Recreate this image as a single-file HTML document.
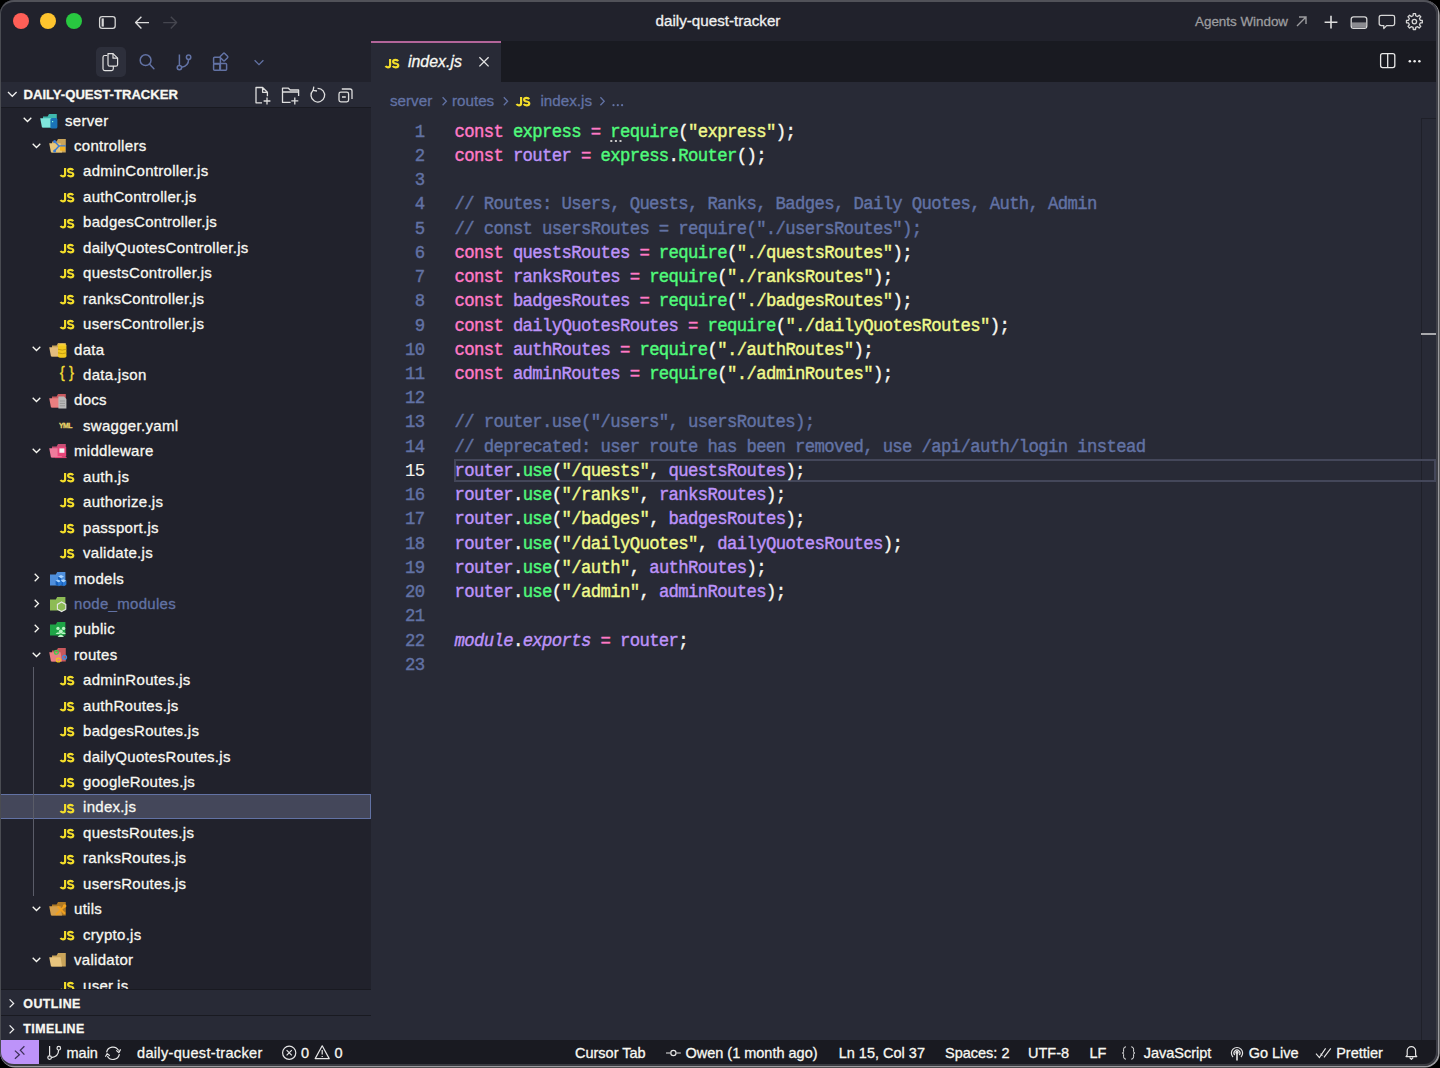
<!DOCTYPE html>
<html><head><meta charset="utf-8">
<style>
*{margin:0;padding:0;box-sizing:border-box}
html,body{width:1440px;height:1068px;overflow:hidden;background:#000}
body{font-family:"Liberation Sans",sans-serif;color:#f8f8f2;position:relative;-webkit-text-stroke:0.3px currentColor}
.abs{position:absolute}
#win{position:absolute;left:0;top:0;width:1438px;height:1066px;border-radius:14px;overflow:hidden;background:#21222c}
#frame{position:absolute;left:0;top:0;width:1438px;height:1066px;border-radius:14px;border-style:solid;border-color:#515259 #3e3f47 #393a40 #4a4c52;border-width:2.5px 2.5px 2.5px 1.5px;pointer-events:none;box-shadow:1px 1px 0 0.6px #9a9a9e}
#titlebar{position:absolute;left:0;top:0;width:1440px;height:41px;background:#21222c}
.tl{position:absolute;top:12.8px;width:16px;height:16px;border-radius:50%}
#title{position:absolute;left:655.5px;top:12.4px;font-size:15.2px;color:#f0f0f0;line-height:18px}
#agents{position:absolute;left:1195px;top:13px;font-size:13.4px;color:#9c9c9f;line-height:18px}
svg{position:absolute;overflow:visible}
/* sidebar */
#sidebar{position:absolute;left:0;top:41px;width:371px;height:999px;background:#21222c}
#acthl{position:absolute;left:96px;top:6.3px;width:30px;height:30px;border-radius:5px;background:#2d2f3b}
#exphdr{position:absolute;left:0;top:41px;width:371px;height:26px;background:#282a36;border-bottom:1px solid #191a21}
#exphdr .t{position:absolute;left:23.5px;top:4px;font-size:13.1px;font-weight:bold;line-height:18px;color:#f8f8f2}
#tree{position:absolute;left:0;top:66px;width:371px;height:882px;overflow:hidden}
.row{position:absolute;left:0;width:371px;height:25.44px;font-size:15px;letter-spacing:0.3px;line-height:18px;color:#f8f8f2;white-space:nowrap}
.row .n{position:absolute;top:4.6px}
.row.sel{background:#44475a;outline:1px solid #6272a4;outline-offset:-1px}
.js{position:absolute;top:10.6px;font-size:12.3px;font-weight:bold;color:#f1dd35;letter-spacing:0;line-height:9px;transform:scaleX(0.98);transform-origin:0 0}
.sechdr{position:absolute;left:0;width:371px;height:25.5px;background:#282a36;border-top:1px solid #191a21}
.sechdr .t{position:absolute;left:23.3px;top:4.3px;letter-spacing:0.45px;font-size:12.4px;font-weight:bold;line-height:18px;color:#f8f8f2}
/* editor */
#tabbar{position:absolute;left:371px;top:41px;width:1069px;height:41px;background:#191a21}
#tab{position:absolute;left:0;top:0;width:129.5px;height:41px;background:#282a36;border-top:2px solid #b3659a}
#tabname{position:absolute;left:37px;top:10.2px;font-size:15.9px;font-style:italic;line-height:18px;color:#f8f8f2}
#editor{position:absolute;left:371px;top:82px;width:1069px;height:958px;background:#282a36}
#crumbs{position:absolute;left:0;top:10px;width:400px;height:20px;font-size:15.2px;color:#6272a4;line-height:18px;white-space:nowrap}
#crumbs span{position:absolute;top:0}
#code{position:absolute;left:0;top:38.6px;width:1069px;font-family:"Liberation Mono",monospace;font-size:17.3px;letter-spacing:-0.64px;line-height:24.24px;white-space:pre}
.ln{position:absolute;left:0;width:53.5px;text-align:right;color:#6272a4;transform:scaleY(1.09);transform-origin:0 18px;-webkit-text-stroke:0.4px currentColor}
.cl{position:absolute;left:83.5px;color:#f8f8f2;transform:scaleY(1.09);transform-origin:0 18px;-webkit-text-stroke:0.4px currentColor}
.k{color:#ff79c6}.g{color:#50fa7b}.s{color:#f1fa8c}.p{color:#bd93f9}.c{color:#6272a4}.i{font-style:italic}
#curline{position:absolute;left:83px;width:982px;height:23.5px;border:2px solid #44475a;margin-top:-1px}
#ruler{position:absolute;left:1049.5px;top:36px;width:1px;height:922px;background:#1f2029}
/* status */
#status{position:absolute;left:0;top:1040px;width:1440px;height:28px;background:#191a21;font-size:14.5px;line-height:18px;color:#f8f8f2;white-space:nowrap}
#remote{position:absolute;left:0;top:0;width:39px;height:28px;background:#bd93f9}
#status .it{position:absolute;top:4.2px}
</style></head><body>
<svg width="0" height="0" style="position:absolute"><defs><g id="jsg" fill="none" stroke="#f4de2a" stroke-width="2.15"><path d="M5.1 0 V6.2 Q5.1 8.3 2.9 8.3 Q1.3 8.3 0.5 7"/><path d="M13.1 2.2 Q12.5 0.9 10.5 0.9 Q8.1 0.9 8.1 2.7 Q8.1 4.1 10.6 4.5 Q13.3 4.9 13.3 6.5 Q13.3 8.3 10.5 8.3 Q8.4 8.3 7.6 7"/></g></defs></svg>
<div id="win">
  <div id="titlebar">
    <div class="tl" style="left:12.8px;background:#ff5f57"></div>
    <div class="tl" style="left:39.5px;background:#fec42e"></div>
    <div class="tl" style="left:66px;background:#28c840"></div>
    <svg style="left:0;top:0" width="200" height="41">
      <rect x="99.6" y="16.6" width="15.6" height="11.8" rx="2.6" fill="none" stroke="#d6d6d6" stroke-width="1.3"/>
      <rect x="101.6" y="18.4" width="2.2" height="8.2" fill="#d6d6d6"/>
      <path d="M135.6 22.6 H149 M141.4 16.8 L135.6 22.6 L141.4 28.4" fill="none" stroke="#dcdcdc" stroke-width="1.4" stroke-linejoin="round"/>
      <path d="M163.2 22.6 H176.6 M170.8 16.8 L176.6 22.6 L170.8 28.4" fill="none" stroke="#45464f" stroke-width="1.4" stroke-linejoin="round"/>
    </svg>
    <div id="title">daily-quest-tracker</div>
    <div id="agents">Agents Window</div>
    <svg style="left:1280px;top:0" width="160" height="41">
      <path d="M17 26 L26 17 M19 17 H26 V24" fill="none" stroke="#9c9c9f" stroke-width="1.4"/>
      <path d="M51 15.8 V28.6 M44.6 22.2 H57.4" fill="none" stroke="#dedede" stroke-width="1.6"/>
      <rect x="71.2" y="16.8" width="15.6" height="11.6" rx="2.4" fill="none" stroke="#d6d6d6" stroke-width="1.3"/>
      <rect x="72" y="22.4" width="14" height="5.4" fill="#8a8a8f"/>
      <path d="M101.5 15.4 H112.8 Q114.6 15.4 114.6 17.2 V23.8 Q114.6 25.6 112.8 25.6 H106.6 L103.8 28.6 V25.6 H101.5 Q99.2 25.6 99.2 23.8 V17.2 Q99.2 15.4 101.5 15.4 Z" fill="none" stroke="#d6d6d6" stroke-width="1.3" stroke-linejoin="round"/>
      <g transform="translate(134.4 21.6)" fill="none" stroke="#d6d6d6" stroke-width="1.3" stroke-linejoin="round">
        <path d="M-1.31 -5.85 L-1.13 -7.92 L1.13 -7.92 L1.31 -5.85 L3.21 -5.07 L4.80 -6.40 L6.40 -4.80 L5.07 -3.21 L5.85 -1.31 L7.92 -1.13 L7.92 1.13 L5.85 1.31 L5.07 3.21 L6.40 4.80 L4.80 6.40 L3.21 5.07 L1.31 5.85 L1.13 7.92 L-1.13 7.92 L-1.31 5.85 L-3.21 5.07 L-4.80 6.40 L-6.40 4.80 L-5.07 3.21 L-5.85 1.31 L-7.92 1.13 L-7.92 -1.13 L-5.85 -1.31 L-5.07 -3.21 L-6.40 -4.80 L-4.80 -6.40 L-3.21 -5.07 Z"/>
        <circle cx="0" cy="0" r="2.2"/>
      </g>
    </svg>
  </div>
  <div id="sidebar">
    <div id="acthl"></div>
    <svg style="left:0;top:0" width="371" height="41">
      <g fill="none" stroke="#e2e2e2" stroke-width="1.2" stroke-linejoin="round">
        <path d="M107.2 14.5 H104.8 Q103 14.5 103 16.3 V27.8 Q103 29.6 104.8 29.6 H111.5 Q113.3 29.6 113.3 27.8 V25"/>
        <path d="M108 12.6 H113 L117.6 17.2 V23.4 Q117.6 25.2 115.8 25.2 H109.8 Q108 25.2 108 23.4 Z"/>
        <path d="M113 12.6 V17.2 H117.6"/>
      </g>
      <g fill="none" stroke="#6272a4" stroke-width="1.5">
        <circle cx="145.6" cy="19.2" r="5.4"/>
        <path d="M149.4 23 L153.9 27.7" stroke-linecap="round"/>
        <circle cx="179.4" cy="26.6" r="2.2"/>
        <circle cx="188.6" cy="16.2" r="2.2"/>
        <path d="M179.4 13.4 V24.4 M188.6 18.4 Q188.6 25 181.5 26.2"/>
        <rect x="213.6" y="16.2" width="6.8" height="6.8" rx="1"/>
        <rect x="213.6" y="22.4" width="6.8" height="6.8" rx="1"/>
        <rect x="219.8" y="22.4" width="6.8" height="6.8" rx="1"/>
        <rect x="221" y="13" width="6" height="6" rx="1" transform="rotate(45 224 16)"/>
        <path d="M254.6 19.2 L259 23.6 L263.4 19.2" stroke-width="1.3"/>
      </g>
    </svg>
    <div id="exphdr"><div class="t">DAILY-QUEST-TRACKER</div>
      <svg style="left:0;top:0" width="371" height="26">
        <polyline points="8,10 12.3,14.3 16.6,10" fill="none" stroke="#f0f0f0" stroke-width="1.3"/>
        <g fill="none" stroke="#dedede" stroke-width="1.3" stroke-linejoin="round">
          <path d="M262 20.8 H256 V5.5 H262.6 L267.4 10.3 V14.2 M262.6 5.5 V10.3 H267.4"/>
          <path d="M267 15.6 V22.4 M263.6 19 H270.4"/>
          <path d="M290.6 20.4 H282.5 V6.2 H288.4 L290.2 8 H298.6 V14 M282.5 10 H298.6"/>
          <path d="M294.8 15.4 V22.4 M291.3 18.9 H298.3"/>
          <path d="M313.2 8.2 A6.8 6.8 0 1 0 317.6 6.4"/>
          <path d="M313.8 4.6 L313.2 8.4 L317 9"/>
          <rect x="339" y="10.2" width="9.6" height="9.6" rx="1.8"/>
          <path d="M341.8 7 H350 Q352 7 352 9 V17 M342 15 H345.8"/>
        </g>
      </svg>
    </div>
    <div id="tree"><div class="row" style="top:0.00px"><svg style="left:22.7px;top:10.3px" width="9" height="6"><polyline points="0.7,0.7 4.5,4.5 8.3,0.7" fill="none" stroke="#f8f8f2" stroke-width="1.3"/></svg><svg style="left:39.5px;top:5.7px" width="18" height="16" viewBox="0 0 18 16"><path d="M3 3.6 H7.6 L9 1 H16.8 V14.6 H3 Z" fill="#3fb8ad"/><path d="M0.2 5.2 H11.6 L13 14.6 H2 Z" fill="#7fe6dc"/><rect x="10.4" y="5" width="7" height="10.6" rx="1.6" fill="#1a73b8"/><rect x="12" y="8" width="1.2" height="1.2" fill="#8fd"/></svg><div class="n" style="left:65.0px"><span>server</span></div></div>
<div class="row" style="top:25.44px"><svg style="left:31.7px;top:10.3px" width="9" height="6"><polyline points="0.7,0.7 4.5,4.5 8.3,0.7" fill="none" stroke="#f8f8f2" stroke-width="1.3"/></svg><svg style="left:48.5px;top:5.7px" width="18" height="16" viewBox="0 0 18 16"><path d="M3 3.6 H7.6 L9 1 H16.8 V14.6 H3 Z" fill="#c9a45a"/><path d="M0.2 5.2 H11.6 L13 14.6 H2 Z" fill="#e8c77a"/><path d="M5.6 3.4 L10 8 L5.6 12.8 M10 8 H16.8" fill="none" stroke="#3a7bd5" stroke-width="1.4"/><circle cx="5.6" cy="3.4" r="1.5" fill="#3a7bd5"/><circle cx="5.6" cy="13" r="1.5" fill="#3a7bd5"/><rect x="11" y="8.6" width="5" height="4" fill="#f5b21d"/></svg><div class="n" style="left:74.0px"><span>controllers</span></div></div>
<div class="row" style="top:50.88px"><svg class="jsi" style="left:60.0px;top:9.8px" width="14" height="10"><use href="#jsg"/></svg><div class="n" style="left:83.0px"><span>adminController.js</span></div></div>
<div class="row" style="top:76.32px"><svg class="jsi" style="left:60.0px;top:9.8px" width="14" height="10"><use href="#jsg"/></svg><div class="n" style="left:83.0px"><span>authController.js</span></div></div>
<div class="row" style="top:101.76px"><svg class="jsi" style="left:60.0px;top:9.8px" width="14" height="10"><use href="#jsg"/></svg><div class="n" style="left:83.0px"><span>badgesController.js</span></div></div>
<div class="row" style="top:127.20px"><svg class="jsi" style="left:60.0px;top:9.8px" width="14" height="10"><use href="#jsg"/></svg><div class="n" style="left:83.0px"><span>dailyQuotesController.js</span></div></div>
<div class="row" style="top:152.64px"><svg class="jsi" style="left:60.0px;top:9.8px" width="14" height="10"><use href="#jsg"/></svg><div class="n" style="left:83.0px"><span>questsController.js</span></div></div>
<div class="row" style="top:178.08px"><svg class="jsi" style="left:60.0px;top:9.8px" width="14" height="10"><use href="#jsg"/></svg><div class="n" style="left:83.0px"><span>ranksController.js</span></div></div>
<div class="row" style="top:203.52px"><svg class="jsi" style="left:60.0px;top:9.8px" width="14" height="10"><use href="#jsg"/></svg><div class="n" style="left:83.0px"><span>usersController.js</span></div></div>
<div class="row" style="top:228.96px"><svg style="left:31.7px;top:10.3px" width="9" height="6"><polyline points="0.7,0.7 4.5,4.5 8.3,0.7" fill="none" stroke="#f8f8f2" stroke-width="1.3"/></svg><svg style="left:48.5px;top:5.7px" width="18" height="16" viewBox="0 0 18 16"><path d="M3 3.6 H7.6 L9 1 H16.8 V14.6 H3 Z" fill="#c9a45a"/><path d="M0.2 5.2 H11.6 L13 14.6 H2 Z" fill="#e3bd7e"/><ellipse cx="13.2" cy="3.6" rx="4.2" ry="1.8" fill="#f7d23a"/><rect x="9" y="3.6" width="8.4" height="10.6" fill="#f2c81e"/><path d="M9 7.2 Q13.2 9 17.4 7.2 M9 10.8 Q13.2 12.6 17.4 10.8" fill="none" stroke="#b8920f" stroke-width="0.8"/><ellipse cx="13.2" cy="14.2" rx="4.2" ry="1.6" fill="#f2c81e"/></svg><div class="n" style="left:74.0px"><span>data</span></div></div>
<div class="row" style="top:254.40px"><div class="js" style="left:59.7px;font-weight:normal;font-size:15px;top:4.6px;line-height:12px;letter-spacing:4.2px;transform:scaleY(1.12)">{}</div><div class="n" style="left:83.0px"><span>data.json</span></div></div>
<div class="row" style="top:279.84px"><svg style="left:31.7px;top:10.3px" width="9" height="6"><polyline points="0.7,0.7 4.5,4.5 8.3,0.7" fill="none" stroke="#f8f8f2" stroke-width="1.3"/></svg><svg style="left:48.5px;top:5.7px" width="18" height="16" viewBox="0 0 18 16"><path d="M3 3.6 H7.6 L9 1 H16.8 V14.6 H3 Z" fill="#c95a5f"/><path d="M0.2 5.2 H11.6 L13 14.6 H2 Z" fill="#ea7f80"/><path d="M9.4 3.6 H15 L17.4 6 V15.4 H9.4 Z" fill="#b9b9b9"/><path d="M10.8 8 H16 M10.8 10.4 H16 M10.8 12.8 H16" stroke="#8a8a8a" stroke-width="0.7"/></svg><div class="n" style="left:74.0px"><span>docs</span></div></div>
<div class="row" style="top:305.28px"><div class="js" style="left:58.5px;font-size:7px;top:9px;color:#e8d36a;letter-spacing:-0.5px">YML</div><div class="n" style="left:83.0px"><span>swagger.yaml</span></div></div>
<div class="row" style="top:330.72px"><svg style="left:31.7px;top:10.3px" width="9" height="6"><polyline points="0.7,0.7 4.5,4.5 8.3,0.7" fill="none" stroke="#f8f8f2" stroke-width="1.3"/></svg><svg style="left:48.5px;top:5.7px" width="18" height="16" viewBox="0 0 18 16"><path d="M3 3.6 H7.6 L9 1 H16.8 V14.6 H3 Z" fill="#c94e74"/><path d="M0.2 5.2 H11.6 L13 14.6 H2 Z" fill="#ef7b9c"/><rect x="8.6" y="3.8" width="8.6" height="9.4" fill="#e8457a"/><rect x="10.4" y="5.4" width="5" height="4.4" fill="#f6f6f6"/><path d="M6 14.6 H17.6" stroke="#e8457a" stroke-width="1"/></svg><div class="n" style="left:74.0px"><span>middleware</span></div></div>
<div class="row" style="top:356.16px"><svg class="jsi" style="left:60.0px;top:9.8px" width="14" height="10"><use href="#jsg"/></svg><div class="n" style="left:83.0px"><span>auth.js</span></div></div>
<div class="row" style="top:381.60px"><svg class="jsi" style="left:60.0px;top:9.8px" width="14" height="10"><use href="#jsg"/></svg><div class="n" style="left:83.0px"><span>authorize.js</span></div></div>
<div class="row" style="top:407.04px"><svg class="jsi" style="left:60.0px;top:9.8px" width="14" height="10"><use href="#jsg"/></svg><div class="n" style="left:83.0px"><span>passport.js</span></div></div>
<div class="row" style="top:432.48px"><svg class="jsi" style="left:60.0px;top:9.8px" width="14" height="10"><use href="#jsg"/></svg><div class="n" style="left:83.0px"><span>validate.js</span></div></div>
<div class="row" style="top:457.92px"><svg style="left:34.0px;top:8.3px" width="6" height="9"><polyline points="0.7,0.7 4.5,4.5 0.7,8.3" fill="none" stroke="#f8f8f2" stroke-width="1.3"/></svg><svg style="left:48.5px;top:5.7px" width="18" height="16" viewBox="0 0 18 16"><path d="M1 3.6 H6.8 L8.2 1 H16.4 V14.6 H1 Z" fill="#4f8fdc"/><path d="M9 5.6 L12 4 L15 5.6 L12 7.2Z M6.6 9.8 L9.6 8.2 L12.6 9.8 L9.6 11.4Z M11.4 9.8 L14.4 8.2 L17.4 9.8 L14.4 11.4Z" fill="#a8d4ff"/><path d="M6.6 9.8 V13.6 L9.6 15.2 V11.4Z M11.4 9.8 V13.6 L14.4 15.2 V11.4Z M9 5.6 V8.4 L12 10 V7.2Z" fill="#1560bd"/><path d="M9.6 11.4 V15.2 L12.6 13.6 V9.8Z M14.4 11.4 V15.2 L17.4 13.6 V9.8Z" fill="#2a7ad6"/></svg><div class="n" style="left:74.0px"><span>models</span></div></div>
<div class="row" style="top:483.36px"><svg style="left:34.0px;top:8.3px" width="6" height="9"><polyline points="0.7,0.7 4.5,4.5 0.7,8.3" fill="none" stroke="#f8f8f2" stroke-width="1.3"/></svg><svg style="left:48.5px;top:5.7px" width="18" height="16" viewBox="0 0 18 16"><path d="M1 3.6 H6.8 L8.2 1 H16.4 V14.6 H1 Z" fill="#8dbb55"/><path d="M12.6 6 L16.8 8.4 V13.2 L12.6 15.6 L8.4 13.2 V8.4 Z" fill="#8dbb55" stroke="#e6e6e6" stroke-width="1.1"/></svg><div class="n" style="left:74.0px"><span style="color:#6272a4">node_modules</span></div></div>
<div class="row" style="top:508.80px"><svg style="left:34.0px;top:8.3px" width="6" height="9"><polyline points="0.7,0.7 4.5,4.5 0.7,8.3" fill="none" stroke="#f8f8f2" stroke-width="1.3"/></svg><svg style="left:48.5px;top:5.7px" width="18" height="16" viewBox="0 0 18 16"><path d="M1 3.6 H6.8 L8.2 1 H16.4 V14.6 H1 Z" fill="#1ea446"/><circle cx="9" cy="7.4" r="1.7" fill="#b9f3c4"/><circle cx="14.6" cy="7.4" r="1.7" fill="#b9f3c4"/><circle cx="11.8" cy="10.6" r="2" fill="#b9f3c4"/><path d="M6.6 13 Q9 9.4 11.4 13 Z M12.2 13 Q14.6 9.4 17 13 Z M8.6 16 Q11.8 11.6 15 16Z" fill="#b9f3c4"/></svg><div class="n" style="left:74.0px"><span>public</span></div></div>
<div class="row" style="top:534.24px"><svg style="left:31.7px;top:10.3px" width="9" height="6"><polyline points="0.7,0.7 4.5,4.5 8.3,0.7" fill="none" stroke="#f8f8f2" stroke-width="1.3"/></svg><svg style="left:48.5px;top:5.7px" width="18" height="16" viewBox="0 0 18 16"><path d="M3 3.6 H7.6 L9 1 H16.8 V14.6 H3 Z" fill="#c9585d"/><path d="M0.2 5.2 H11.6 L13 14.6 H2 Z" fill="#eb8082"/><circle cx="7.4" cy="5.2" r="1.9" fill="none" stroke="#3ecf4c" stroke-width="1.3"/><circle cx="9.4" cy="13" r="1.9" fill="none" stroke="#f2c41c" stroke-width="1.3"/><circle cx="15.6" cy="10.2" r="1.9" fill="none" stroke="#3f8de0" stroke-width="1.3"/></svg><div class="n" style="left:74.0px"><span>routes</span></div></div>
<div class="row" style="top:559.68px"><svg class="jsi" style="left:60.0px;top:9.8px" width="14" height="10"><use href="#jsg"/></svg><div class="n" style="left:83.0px"><span>adminRoutes.js</span></div></div>
<div class="row" style="top:585.12px"><svg class="jsi" style="left:60.0px;top:9.8px" width="14" height="10"><use href="#jsg"/></svg><div class="n" style="left:83.0px"><span>authRoutes.js</span></div></div>
<div class="row" style="top:610.56px"><svg class="jsi" style="left:60.0px;top:9.8px" width="14" height="10"><use href="#jsg"/></svg><div class="n" style="left:83.0px"><span>badgesRoutes.js</span></div></div>
<div class="row" style="top:636.00px"><svg class="jsi" style="left:60.0px;top:9.8px" width="14" height="10"><use href="#jsg"/></svg><div class="n" style="left:83.0px"><span>dailyQuotesRoutes.js</span></div></div>
<div class="row" style="top:661.44px"><svg class="jsi" style="left:60.0px;top:9.8px" width="14" height="10"><use href="#jsg"/></svg><div class="n" style="left:83.0px"><span>googleRoutes.js</span></div></div>
<div class="row sel" style="top:686.88px"><svg class="jsi" style="left:60.0px;top:9.8px" width="14" height="10"><use href="#jsg"/></svg><div class="n" style="left:83.0px"><span>index.js</span></div></div>
<div class="row" style="top:712.32px"><svg class="jsi" style="left:60.0px;top:9.8px" width="14" height="10"><use href="#jsg"/></svg><div class="n" style="left:83.0px"><span>questsRoutes.js</span></div></div>
<div class="row" style="top:737.76px"><svg class="jsi" style="left:60.0px;top:9.8px" width="14" height="10"><use href="#jsg"/></svg><div class="n" style="left:83.0px"><span>ranksRoutes.js</span></div></div>
<div class="row" style="top:763.20px"><svg class="jsi" style="left:60.0px;top:9.8px" width="14" height="10"><use href="#jsg"/></svg><div class="n" style="left:83.0px"><span>usersRoutes.js</span></div></div>
<div class="row" style="top:788.64px"><svg style="left:31.7px;top:10.3px" width="9" height="6"><polyline points="0.7,0.7 4.5,4.5 8.3,0.7" fill="none" stroke="#f8f8f2" stroke-width="1.3"/></svg><svg style="left:48.5px;top:5.7px" width="18" height="16" viewBox="0 0 18 16"><path d="M3 3.6 H7.6 L9 1 H16.8 V14.6 H3 Z" fill="#b07a24"/><path d="M0.2 5.2 H11.6 L13 14.6 H2 Z" fill="#d6a04c"/><path d="M7 13.6 L15.4 5.2 M8.6 5.4 L16 12.8" stroke="#f2a11f" stroke-width="2"/><circle cx="15.6" cy="5" r="1.8" fill="#f2a11f"/></svg><div class="n" style="left:74.0px"><span>utils</span></div></div>
<div class="row" style="top:814.08px"><svg class="jsi" style="left:60.0px;top:9.8px" width="14" height="10"><use href="#jsg"/></svg><div class="n" style="left:83.0px"><span>crypto.js</span></div></div>
<div class="row" style="top:839.52px"><svg style="left:31.7px;top:10.3px" width="9" height="6"><polyline points="0.7,0.7 4.5,4.5 8.3,0.7" fill="none" stroke="#f8f8f2" stroke-width="1.3"/></svg><svg style="left:48.5px;top:5.7px" width="18" height="16" viewBox="0 0 18 16"><path d="M3 3.6 H7.6 L9 1 H16.8 V14.6 H3 Z" fill="#c9a45a"/><path d="M0.2 5.2 H11.6 L13 14.6 H2 Z" fill="#e8c57e"/></svg><div class="n" style="left:74.0px"><span>validator</span></div></div>
<div class="row" style="top:864.96px"><svg class="jsi" style="left:60.0px;top:9.8px" width="14" height="10"><use href="#jsg"/></svg><div class="n" style="left:83.0px"><span>user.js</span></div></div><div class="abs" style="left:32.6px;top:559.68px;width:1.4px;height:228.96px;background:#5a5c68"></div></div>
    <div class="sechdr" style="top:948.3px"><div class="t">OUTLINE</div>
      <svg style="left:0;top:0" width="30" height="25"><polyline points="9.6,9.4 13.6,13.4 9.6,17.4" fill="none" stroke="#f0f0f0" stroke-width="1.3"/></svg></div>
    <div class="sechdr" style="top:974px"><div class="t">TIMELINE</div>
      <svg style="left:0;top:0" width="30" height="25"><polyline points="9.6,9.4 13.6,13.4 9.6,17.4" fill="none" stroke="#f0f0f0" stroke-width="1.3"/></svg></div>
  </div>
  <div id="tabbar">
    <div id="tab">
      <svg style="left:13.8px;top:15.8px" width="14" height="10"><use href="#jsg"/></svg>
      <div id="tabname">index.js</div>
      <svg style="left:0;top:0" width="129" height="40"><path d="M108.4 14.2 L117.6 23.4 M117.6 14.2 L108.4 23.4" stroke="#e6e6e6" stroke-width="1.3"/></svg>
    </div>
    <svg style="left:0;top:0" width="1069" height="41">
      <rect x="1009.6" y="12.6" width="14.2" height="14" rx="2" fill="none" stroke="#e8e8e8" stroke-width="1.3"/>
      <path d="M1016.7 12.6 V26.6" stroke="#e8e8e8" stroke-width="1.3"/>
      <circle cx="1038.8" cy="20.3" r="1.25" fill="#eee"/><circle cx="1043.6" cy="20.3" r="1.25" fill="#eee"/><circle cx="1048.4" cy="20.3" r="1.25" fill="#eee"/>
    </svg>
  </div>
  <div id="editor">
    <div id="crumbs">
      <span style="left:19px">server</span>
      <span style="left:81px">routes</span>
      <span style="left:169.5px">index.js</span>
      <svg style="left:0;top:0" width="400" height="20"><g fill="none" stroke="#6272a4" stroke-width="1.3"><polyline points="71.6,5.2 75.4,9.2 71.6,13.2"/><polyline points="132.8,5.2 136.6,9.2 132.8,13.2"/><polyline points="229.4,5.2 233.2,9.2 229.4,13.2"/></g>
      <circle cx="242.5" cy="13.2" r="1.1" fill="#6272a4"/><circle cx="246.8" cy="13.2" r="1.1" fill="#6272a4"/><circle cx="251.1" cy="13.2" r="1.1" fill="#6272a4"/></svg>
      <svg style="left:145.4px;top:4.8px" width="14" height="10"><use href="#jsg"/></svg>
    </div>
    <div id="ruler"></div>
    <div class="abs" style="left:1049.5px;top:36px;width:15px;height:1px;background:#1f2029"></div>
    <svg style="left:0;top:0" width="300" height="70"><g fill="#c8c8c8"><rect x="239.3" y="58" width="2" height="2"/><rect x="243.9" y="58" width="2" height="2"/><rect x="248.5" y="58" width="2" height="2"/></g></svg>
    <div class="abs" style="left:1050px;top:251px;width:15px;height:2px;background:#a9a9ad"></div>
    <div id="code"><div id="curline" style="top:339.36px"></div>
<div class="ln" style="top:0.00px">1</div><div class="cl" style="top:0.00px"><span class="k">const</span> <span class="g">express</span> <span class="k">=</span> <span class="g">require</span>(<span class="s">"express"</span>);</div>
<div class="ln" style="top:24.24px">2</div><div class="cl" style="top:24.24px"><span class="k">const</span> <span class="p">router</span> <span class="k">=</span> <span class="g">express</span>.<span class="g">Router</span>();</div>
<div class="ln" style="top:48.48px">3</div><div class="cl" style="top:48.48px"></div>
<div class="ln" style="top:72.72px">4</div><div class="cl" style="top:72.72px"><span class="c">// Routes: Users, Quests, Ranks, Badges, Daily Quotes, Auth, Admin</span></div>
<div class="ln" style="top:96.96px">5</div><div class="cl" style="top:96.96px"><span class="c">// const usersRoutes = require("./usersRoutes");</span></div>
<div class="ln" style="top:121.20px">6</div><div class="cl" style="top:121.20px"><span class="k">const</span> <span class="p">questsRoutes</span> <span class="k">=</span> <span class="g">require</span>(<span class="s">"./questsRoutes"</span>);</div>
<div class="ln" style="top:145.44px">7</div><div class="cl" style="top:145.44px"><span class="k">const</span> <span class="p">ranksRoutes</span> <span class="k">=</span> <span class="g">require</span>(<span class="s">"./ranksRoutes"</span>);</div>
<div class="ln" style="top:169.68px">8</div><div class="cl" style="top:169.68px"><span class="k">const</span> <span class="p">badgesRoutes</span> <span class="k">=</span> <span class="g">require</span>(<span class="s">"./badgesRoutes"</span>);</div>
<div class="ln" style="top:193.92px">9</div><div class="cl" style="top:193.92px"><span class="k">const</span> <span class="p">dailyQuotesRoutes</span> <span class="k">=</span> <span class="g">require</span>(<span class="s">"./dailyQuotesRoutes"</span>);</div>
<div class="ln" style="top:218.16px">10</div><div class="cl" style="top:218.16px"><span class="k">const</span> <span class="p">authRoutes</span> <span class="k">=</span> <span class="g">require</span>(<span class="s">"./authRoutes"</span>);</div>
<div class="ln" style="top:242.40px">11</div><div class="cl" style="top:242.40px"><span class="k">const</span> <span class="p">adminRoutes</span> <span class="k">=</span> <span class="g">require</span>(<span class="s">"./adminRoutes"</span>);</div>
<div class="ln" style="top:266.64px">12</div><div class="cl" style="top:266.64px"></div>
<div class="ln" style="top:290.88px">13</div><div class="cl" style="top:290.88px"><span class="c">// router.use("/users", usersRoutes);</span></div>
<div class="ln" style="top:315.12px">14</div><div class="cl" style="top:315.12px"><span class="c">// deprecated: user route has been removed, use /api/auth/login instead</span></div>
<div class="ln" style="top:339.36px;color:#f4f4ee;-webkit-text-stroke:0.1px currentColor">15</div><div class="cl" style="top:339.36px"><span class="p">router</span>.<span class="g">use</span>(<span class="s">"/quests"</span>, <span class="p">questsRoutes</span>);</div>
<div class="ln" style="top:363.60px">16</div><div class="cl" style="top:363.60px"><span class="p">router</span>.<span class="g">use</span>(<span class="s">"/ranks"</span>, <span class="p">ranksRoutes</span>);</div>
<div class="ln" style="top:387.84px">17</div><div class="cl" style="top:387.84px"><span class="p">router</span>.<span class="g">use</span>(<span class="s">"/badges"</span>, <span class="p">badgesRoutes</span>);</div>
<div class="ln" style="top:412.08px">18</div><div class="cl" style="top:412.08px"><span class="p">router</span>.<span class="g">use</span>(<span class="s">"/dailyQuotes"</span>, <span class="p">dailyQuotesRoutes</span>);</div>
<div class="ln" style="top:436.32px">19</div><div class="cl" style="top:436.32px"><span class="p">router</span>.<span class="g">use</span>(<span class="s">"/auth"</span>, <span class="p">authRoutes</span>);</div>
<div class="ln" style="top:460.56px">20</div><div class="cl" style="top:460.56px"><span class="p">router</span>.<span class="g">use</span>(<span class="s">"/admin"</span>, <span class="p">adminRoutes</span>);</div>
<div class="ln" style="top:484.80px">21</div><div class="cl" style="top:484.80px"></div>
<div class="ln" style="top:509.04px">22</div><div class="cl" style="top:509.04px"><span class="p i">module</span>.<span class="p i">exports</span> <span class="k">=</span> <span class="p">router</span>;</div>
<div class="ln" style="top:533.28px">23</div><div class="cl" style="top:533.28px"></div></div>
  </div>
  <div id="status">
    <div id="remote"></div>
    <svg style="left:0;top:0" width="1440" height="28">
      <path d="M14.9 10.6 L19.4 14.7 L14.9 18.8 M24.4 6.3 L20.3 10.2 L24.4 14.7" fill="none" stroke="#3d3058" stroke-width="1.25"/>
      <g fill="none" stroke="#e6e6e6" stroke-width="1.2">
        <circle cx="49.6" cy="17.6" r="1.8"/><circle cx="58.8" cy="8.2" r="1.8"/>
        <path d="M49.6 6 V15.8 M58.6 10 Q58.6 16.6 51.4 17.6"/>
        <path d="M106.6 12.4 A6.4 6.4 0 0 1 118.6 10.6 M119.4 14.2 A6.4 6.4 0 0 1 107.4 16"/>
        <path d="M116.2 10.4 L118.8 12.6 L120.6 9.4 M109.8 15.8 L107.2 13.6 L105.4 16.8" stroke-linejoin="round"/>
        <circle cx="289.2" cy="12.8" r="6.6"/>
        <path d="M286.6 10.2 L291.8 15.4 M291.8 10.2 L286.6 15.4"/>
        <path d="M322.2 5.8 L329.2 18.6 H315.2 Z" stroke-linejoin="round"/>
        <path d="M322.2 10 V14.6 M322.2 16 V17"/>
        <path d="M666 13 H670.4 M676.4 13 H680.8"/><circle cx="673.4" cy="13" r="2.6"/>
        <path d="M1126 6.8 Q1123.6 6.8 1123.6 9.2 V11.6 Q1123.6 13 1122.4 13 Q1123.6 13 1123.6 14.4 V16.8 Q1123.6 19.2 1126 19.2 M1131.2 6.8 Q1133.6 6.8 1133.6 9.2 V11.6 Q1133.6 13 1134.8 13 Q1133.6 13 1133.6 14.4 V16.8 Q1133.6 19.2 1131.2 19.2" stroke-width="1"/>
        <path d="M1233 17 A5.6 5.6 0 1 1 1241 17 M1234.8 15 A3 3 0 1 1 1239.2 15"/>
        <circle cx="1237" cy="12.4" r="1.1" fill="#e6e6e6"/><path d="M1237 13.4 V20.4" stroke-width="1.6"/>
        <path d="M1316 13.6 L1319.4 17.6 L1325.6 8.4 M1320.6 13.6 L1322.4 15.6 M1324 17.4 L1330.8 8.4" stroke-width="1.1"/>
        <path d="M1406 16.6 H1416.8 L1415.6 15.2 V10.8 A4.2 4.2 0 0 0 1407.2 10.8 V15.2 Z M1409.6 17.6 L1411.4 19.4 L1413.2 17.6" stroke-linejoin="round"/>
      </g>
    </svg>
    <div class="it" style="left:66.5px">main</div>
    <div class="it" style="left:137px;letter-spacing:0.33px">daily-quest-tracker</div>
    <div class="it" style="left:301px">0</div>
    <div class="it" style="left:334.4px">0</div>
    <div class="it" style="left:575px">Cursor Tab</div>
    <div class="it" style="left:685.4px">Owen (1 month ago)</div>
    <div class="it" style="left:838.7px">Ln 15, Col 37</div>
    <div class="it" style="left:945px">Spaces: 2</div>
    <div class="it" style="left:1028px">UTF-8</div>
    <div class="it" style="left:1089.4px">LF</div>
    <div class="it" style="left:1143.7px">JavaScript</div>
    <div class="it" style="left:1248.7px">Go Live</div>
    <div class="it" style="left:1336.2px">Prettier</div>
  </div>
</div>
<div id="frame"></div>
</body></html>
